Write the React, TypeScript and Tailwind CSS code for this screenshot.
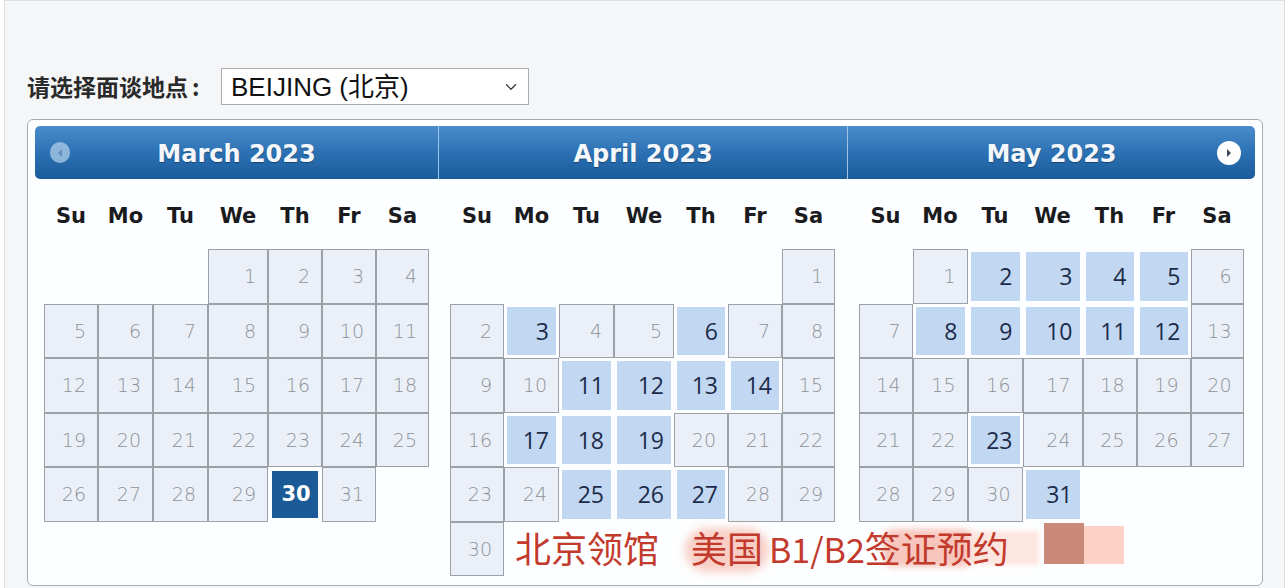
import React from "react";
import { ChevronDown } from "lucide-react";

type Month = {
  name: string;
  start: number; // weekday of the 1st, 0 = Sunday
  days: number;
  open: number[];
  selected?: number;
};

const months: Month[] = [
  { name: "March 2023", start: 3, days: 31, open: [], selected: 30 },
  { name: "April 2023", start: 6, days: 30, open: [3, 6, 11, 12, 13, 14, 17, 18, 19, 25, 26, 27] },
  { name: "May 2023", start: 1, days: 31, open: [2, 3, 4, 5, 8, 9, 10, 11, 12, 23, 31] },
];

const weekdays = ["Su", "Mo", "Tu", "We", "Th", "Fr", "Sa"];
const sectionWidths = ["w-[403px]", "w-[409px] border-l border-[#9fc3e6]", "w-[408px] border-l border-[#9fc3e6]"];
const bodyWidths = ["w-[403px]", "w-[409px]", "w-[408px]"];

function DayCell({ day, month }: { day: number; month: Month }) {
  if (month.selected === day) {
    return (
      <div className="p-[4px]">
        <div className="flex h-full items-center justify-center bg-[#1b5a96] pl-[2px] font-['DejaVu_Sans',sans-serif] text-[21px] font-bold text-white">
          {day}
        </div>
      </div>
    );
  }
  if (month.open.includes(day)) {
    return (
      <div className="p-[3px]">
        <div className="flex h-full items-center justify-end bg-[#c2d7f1] pr-[7px] font-['Open_Sans',sans-serif] text-[23px] font-medium text-[#1b2b49]">
          {day}
        </div>
      </div>
    );
  }
  return (
    <div className="flex items-center justify-end border border-[#9ca1a8] bg-[#ebf0f8] pr-[11px] font-['DejaVu_Sans',sans-serif] text-[19px] font-extralight text-[#8d9299]">
      {day}
    </div>
  );
}

function MonthGrid({ month }: { month: Month }) {
  const blanks = Array.from({ length: month.start });
  const days = Array.from({ length: month.days }, (_, i) => i + 1);
  return (
    <div className="w-[385px]">
      <div className="grid h-[70px] grid-cols-[54px_55px_55px_60px_54px_54px_53px] items-center pt-[5px]">
        {weekdays.map((w) => (
          <div key={w} className="text-center font-['DejaVu_Sans',sans-serif] text-[21px] font-bold text-[#1a1b1e]">
            {w}
          </div>
        ))}
      </div>
      <div className="grid grid-cols-[54px_55px_55px_60px_54px_54px_53px] auto-rows-[54.5px]">
        {blanks.map((_, i) => (
          <div key={"b" + i} />
        ))}
        {days.map((d) => (
          <DayCell key={d} day={d} month={month} />
        ))}
      </div>
    </div>
  );
}

export default function App() {
  return (
    <div className="min-h-screen bg-white">
      <div className="relative ml-[4px] h-[588px] w-[1281px] overflow-hidden border-x border-t border-[#dcdee2] bg-[#f5f6f8] pl-[22px] pt-[67px]">
        {/* Location picker */}
        <div className="flex h-[37px] items-center">
          <span className="w-[194px] whitespace-nowrap font-['Noto_Sans_CJK_SC',sans-serif] text-[23px] font-bold text-[#2a2a2a]">
            请选择面谈地点<span className="ml-[4px]">:</span>
          </span>
          <div className="flex h-[37px] w-[308px] items-center justify-between border border-[#a9abae] bg-white pl-[9px] pr-[8px]">
            <span className="font-['Liberation_Sans','Noto_Sans_CJK_SC',sans-serif] text-[26px] leading-none text-[#111]">
              BEIJING (北京)
            </span>
            <ChevronDown size={18} strokeWidth={1.6} className="text-[#333]" />
          </div>
        </div>

        {/* Three-month datepicker */}
        <div className="mt-[14px] w-[1236px] rounded-[6px] border border-[#a7abb1] bg-[#fdfeff] px-[7px] pb-[9px] pt-[6px]">
          <div className="relative flex h-[53px] rounded-[5px] bg-gradient-to-b from-[#4b8dcc] via-[#2b71b3] to-[#1a5c9b]">
            {months.map((m, i) => (
              <div
                key={m.name}
                className={`${sectionWidths[i]} flex items-center justify-center pt-[2px] font-['DejaVu_Sans',sans-serif] text-[24px] font-bold text-[#f4f8fc] [text-shadow:0_1px_1px_rgba(0,0,0,0.35)]`}
              >
                {m.name}
              </div>
            ))}
            <span className="absolute left-[15px] top-[16px] flex h-[21px] w-[20px] items-center justify-center rounded-full bg-[#a6c6e4]/80">
              <svg width="8" height="10" viewBox="0 0 8 10">
                <path d="M6 1 L2 5 L6 9 Z" fill="#5f8fbd" />
              </svg>
            </span>
            <span className="absolute right-[14px] top-[15px] flex h-[24px] w-[24px] items-center justify-center rounded-full bg-white">
              <svg width="8" height="10" viewBox="0 0 8 10">
                <path d="M2 1 L6 5 L2 9 Z" fill="#3b4756" />
              </svg>
            </span>
          </div>
          <div className="flex h-[397px]">
            {months.map((m, i) => (
              <div key={m.name} className={`${bodyWidths[i]} flex justify-center`}>
                <MonthGrid month={m} />
              </div>
            ))}
          </div>
        </div>

        {/* Red caption stamped over the lower calendar */}
        <div className="pointer-events-none absolute left-[680px] top-[527px] h-[44px] w-[84px] rounded-full bg-[#f7c3b7] opacity-80 blur-[4px]" />
        <div className="pointer-events-none absolute left-[878px] top-[528px] h-[38px] w-[90px] rounded-[10px] bg-[#f7b9ac] opacity-80 blur-[3px]" />
        <div className="pointer-events-none absolute left-[964px] top-[530px] h-[34px] w-[70px] bg-[#fde4dc] opacity-90 blur-[2px]" />
        <div className="pointer-events-none absolute left-[510px] top-[525px] whitespace-nowrap font-['Noto_Sans_CJK_SC',sans-serif] text-[36px] leading-[42px] text-[#c23a2c]">
          北京领馆<span className="ml-[32px]">美国</span>
          <span className="ml-[6px] text-[34px]">B1/B2</span>
          <span>签证预约</span>
        </div>
        <div className="absolute left-[1039px] top-[522px] h-[41px] w-[40px] bg-[#c98a7a]" />
        <div className="absolute left-[1079px] top-[525px] h-[38px] w-[40px] bg-[#fcd2c6]" />
      </div>
    </div>
  );
}
